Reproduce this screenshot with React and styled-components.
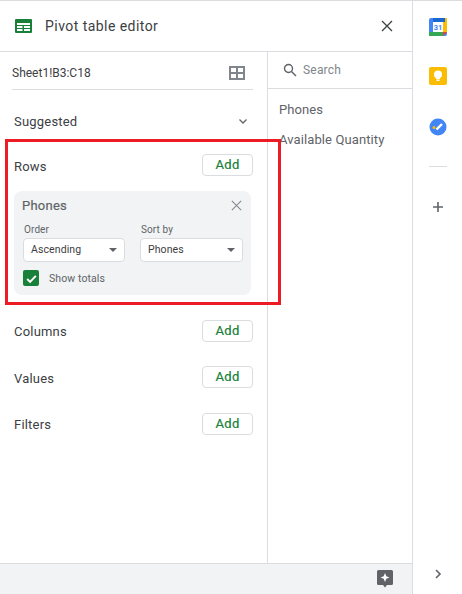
import React from 'react';
import styled, { createGlobalStyle } from 'styled-components';

const Global = createGlobalStyle`
  html, body { margin: 0; padding: 0; background: #fff; }
  body { font-family: Roboto, "Liberation Sans", sans-serif; color: #3c4043; }
`;
const Page = styled.div`
  position: relative; width: 462px; height: 594px; overflow: hidden; display: flex; background: #fff;
  border-top: 1px solid #dadce0; box-sizing: border-box;
`;
const Editor = styled.div`
  width: 412px; display: flex; flex-direction: column; border-right: 1px solid #dadce0; flex: none;
`;
const Header = styled.header`
  height: 50px; flex: none; display: flex; align-items: center; padding: 0 18px 0 15px; border-bottom: 1px solid #dadce0;
`;
const Title = styled.h1`
  margin: 0 0 0 13px; flex: 1; font-size: 14px; font-weight: 400; letter-spacing: 0.45px; color: #3c4043;
`;
const Body = styled.div`flex: 1; display: flex; min-height: 0;`;
const Left = styled.div`
  width: 241px; flex: none; border-right: 1px solid #dadce0; padding: 0 14px 0 12px;
`;
const Range = styled.div`
  height: 38px; box-sizing: border-box; padding: 5px 8px 0 0; display: flex; align-items: center; justify-content: space-between;
  border-bottom: 1px solid #dadce0; font-size: 12px; color: #3c4043;
`;
const Section = styled.div`
  display: flex; align-items: center; justify-content: space-between; margin-left: 2px; height: 22px; margin-top: ${p => p.$top}px;
  font-size: 13px; letter-spacing: 0.2px; color: #3c4043;
`;
const SectionLabel = styled.span`padding-top: ${p => p.$drop}px;`;
const Add = styled.button`
  width: 51px; height: 22px; box-sizing: border-box; padding: 0 0 2px; background: #fff; border: 1px solid #dadce0; border-radius: 4px;
  color: #188038; font: 400 13px Roboto, sans-serif; letter-spacing: 0.35px; -webkit-text-stroke: 0.2px #188038;
`;
const Card = styled.div`
  margin: 15px 2px 0 2px; height: 104px; box-sizing: border-box; background: #f1f3f4; border-radius: 8px; padding: 6px 8px 0;
`;
const CardHead = styled.div`
  display: flex; align-items: center; justify-content: space-between; height: 16px; font-size: 13px; letter-spacing: 0.25px; color: #5f6368;
  -webkit-text-stroke: 0.2px #5f6368;
`;
const Fields = styled.div`display: flex; gap: 15px; margin: 10px 0 0 1px;`;
const Field = styled.div`width: ${p => p.$w}px;`;
const FieldLabel = styled.div`font-size: 10px; color: #5f6368; padding-left: 1px; height: 13px; line-height: 13px; letter-spacing: 0.1px;`;
const Select = styled.div`
  margin-top: 2px; height: 24px; box-sizing: border-box; background: #fff; border: 1px solid #dadce0; border-radius: 4px;
  display: flex; align-items: center; justify-content: space-between; padding: 0 7px 1px; font-size: 10.5px; letter-spacing: 0.1px; color: #3c4043;
`;
const Caret = styled.span`width: 0; height: 0; margin-top: 1px; border-left: 4px solid transparent; border-right: 4px solid transparent; border-top: 4px solid #5f6368;`;
const Totals = styled.div`display: flex; align-items: center; gap: 10px; margin: 8px 0 0 1px; font-size: 10.5px; letter-spacing: 0.1px; color: #5f6368;`;
const Check = styled.span`
  width: 16px; height: 16px; border-radius: 2px; background: #188038; display: flex; align-items: center; justify-content: center;
`;
const Right = styled.div`flex: 1; min-width: 0;`;
const Search = styled.div`
  height: 37px; box-sizing: border-box; display: flex; align-items: center; gap: 6px; padding-left: 15px; border-bottom: 1px solid #dadce0;
  font-size: 12px; letter-spacing: 0.2px; color: #80868b;
`;
const ItemList = styled.div`padding-top: 6px;`;
const Item = styled.div`
  height: 30px; line-height: 30px; padding-left: 11px; font-size: 13px; letter-spacing: 0.1px; color: #5f6368; white-space: nowrap;
`;
const Footer = styled.footer`
  height: 30px; flex: none; background: #f1f3f4; border-top: 1px solid #dadce0; display: flex; align-items: center; justify-content: flex-end; padding-right: 19px;
`;
const Sidebar = styled.aside`
  flex: 1; display: flex; flex-direction: column; align-items: center; padding-top: 17px;
`;
const Rail = styled.div`width: 18px; height: 18px; margin-bottom: ${p => p.$gap}px; display: flex;`;
const Divider = styled.div`width: 18px; height: 1px; background: #dadce0; margin: 0 0 31px;`;
const Spacer = styled.div`flex: 1;`;
const Chevron = styled.div`height: 16px; margin-bottom: 12px; display: flex;`;
const Highlight = styled.div`
  position: absolute; left: 5px; top: 138px; width: 276px; height: 166px; box-sizing: border-box; border: 3px solid #ed1c24; pointer-events: none;
`;

const X = ({ s = 14, c = '#5f6368', w = 1.5 }) => (
  <svg width={s} height={s} viewBox="0 0 14 14"><path d="M2 2l10 10M12 2L2 12" stroke={c} strokeWidth={w} fill="none" /></svg>
);

export default function App() {
  return (
    <Page>
      <Global />
      <Editor>
        <Header>
          <svg width="17" height="14" viewBox="0 0 17 14">
            <rect width="17" height="14" rx="1" fill="#188038" />
            <path d="M2 4h13v2H2zM2 7h5.500v2H2zM9 7h6v2H9zM2 10h5.500v2H2zM9 10h6v2H9z" fill="#fff" />
          </svg>
          <Title>Pivot table editor</Title>
          <X s={14} c="#3c4043" w={1.3} />
        </Header>
        <Body>
          <Left>
            <Range>
              <span>Sheet1!B3:C18</span>
              <svg width="16" height="14" viewBox="0 0 16 14">
                <path d="M1 1h14v12H1zM8 1v12M1 7h14" stroke="#80868b" strokeWidth="2" fill="none" />
              </svg>
            </Range>
            <Section $top={20}>
              <span>Suggested</span>
              <svg width="12" height="12" viewBox="0 0 12 12" style={{ marginRight: 4 }}>
                <path d="M2.500 4.500L6 8l3.500-3.500" stroke="#5f6368" strokeWidth="1.300" fill="none" />
              </svg>
            </Section>
            <Section $top={22}>
              <SectionLabel $drop={2}>Rows</SectionLabel>
              <Add>Add</Add>
            </Section>
            <Card>
              <CardHead>
                <span>Phones</span>
                <X s={13} c="#80868b" w={1.1} />
              </CardHead>
              <Fields>
                <Field $w={102}>
                  <FieldLabel>Order</FieldLabel>
                  <Select>Ascending<Caret /></Select>
                </Field>
                <Field $w={103}>
                  <FieldLabel>Sort by</FieldLabel>
                  <Select>Phones<Caret /></Select>
                </Field>
              </Fields>
              <Totals>
                <Check>
                  <svg width="13" height="13" viewBox="0 0 12 12"><path d="M2 6.500l2.700 2.700L10 3.500" stroke="#fff" strokeWidth="1.800" fill="none" /></svg>
                </Check>
                Show totals
              </Totals>
            </Card>
            <Section $top={25}><SectionLabel $drop={0}>Columns</SectionLabel><Add>Add</Add></Section>
            <Section $top={24}><SectionLabel $drop={2}>Values</SectionLabel><Add>Add</Add></Section>
            <Section $top={25}><SectionLabel $drop={0}>Filters</SectionLabel><Add>Add</Add></Section>
          </Left>
          <Right>
            <Search>
              <svg width="14" height="14" viewBox="0 0 14 14">
                <circle cx="5.500" cy="5.500" r="4" stroke="#5f6368" strokeWidth="1.400" fill="none" />
                <path d="M8.500 8.500L13 13" stroke="#5f6368" strokeWidth="1.400" />
              </svg>
              Search
            </Search>
            <ItemList>
              <Item>Phones</Item>
              <Item>Available Quantity</Item>
            </ItemList>
          </Right>
        </Body>
        <Footer>
          <svg width="16" height="18" viewBox="0 0 16 18">
            <path d="M1.500 0h13A1.500 1.500 0 0 1 16 1.500v12a1.500 1.500 0 0 1-1.500 1.500H10l-2 2.500L6 15H1.500A1.500 1.500 0 0 1 0 13.500v-12A1.500 1.500 0 0 1 1.500 0z" fill="#5f6368" />
            <path d="M8 3l1.300 3.200L12.500 7.500 9.300 8.800 8 12 6.700 8.800 3.500 7.500 6.700 6.200z" fill="#fff" />
          </svg>
        </Footer>
      </Editor>
      <Sidebar>
        <Rail $gap={31}>
          <svg width="18" height="18" viewBox="0 0 18 18">
            <rect width="18" height="18" rx="2" fill="#4285f4" />
            <rect x="14" width="4" height="14" fill="#fbbc04" />
            <rect y="14" width="14" height="4" fill="#34a853" />
            <path d="M14 14h4l-4 4z" fill="#ea4335" />
            <path d="M4 0h12v4H4z" fill="#1967d2" />
            <rect x="4" y="4" width="10" height="10" fill="#fff" />
            <text x="9" y="12" textAnchor="middle" fontSize="7.500" fontWeight="700" fontFamily="Roboto" fill="#4285f4">31</text>
          </svg>
        </Rail>
        <Rail $gap={33}>
          <svg width="18" height="18" viewBox="0 0 18 18">
            <rect width="18" height="18" rx="2" fill="#fbbc04" />
            <circle cx="9" cy="7.500" r="4" fill="#fff" />
            <rect x="7" y="10" width="4" height="2" fill="#fff" />
            <rect x="7.500" y="12.500" width="3" height="1.500" fill="#fff" />
          </svg>
        </Rail>
        <Rail $gap={30}>
          <svg width="18" height="18" viewBox="0 0 18 18">
            <circle cx="9" cy="9" r="8.500" fill="#4285f4" />
            <path d="M7.500 11.500L13 6" stroke="#fff" strokeWidth="2.400" />
            <circle cx="5" cy="9.500" r="1.500" fill="#fbbc04" />
          </svg>
        </Rail>
        <Divider />
        <Rail $gap={0}>
          <svg width="18" height="18" viewBox="0 0 18 18"><path d="M9 4v10M4 9h10" stroke="#5f6368" strokeWidth="1.600" /></svg>
        </Rail>
        <Spacer />
        <Chevron>
          <svg width="16" height="16" viewBox="0 0 16 16"><path d="M6 4l4 4-4 4" stroke="#5f6368" strokeWidth="1.600" fill="none" /></svg>
        </Chevron>
      </Sidebar>
      <Highlight />
    </Page>
  );
}
